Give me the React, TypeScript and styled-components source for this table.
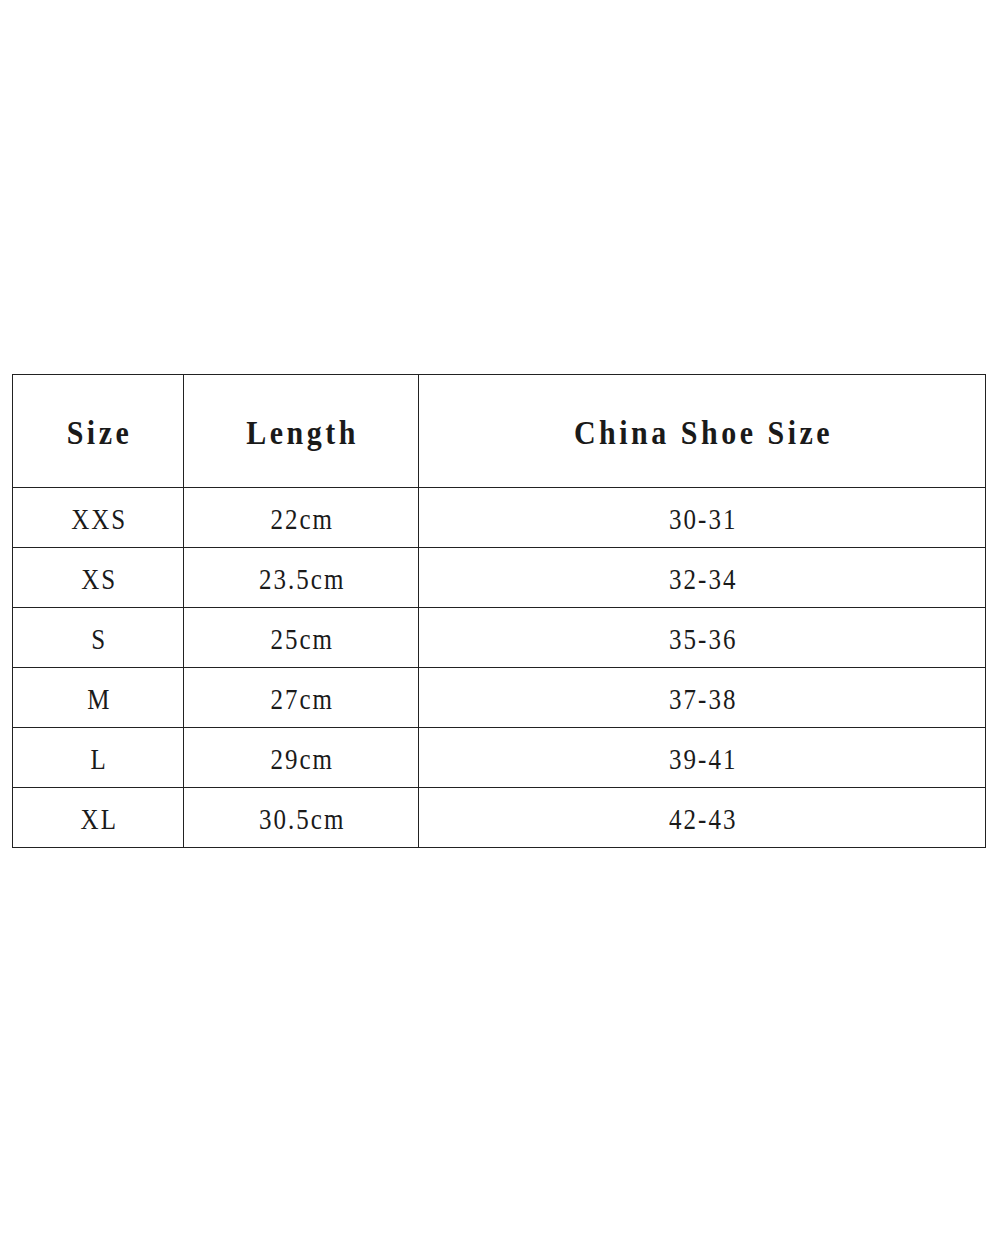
import React from 'react'
import styled, { createGlobalStyle } from 'styled-components'

const GlobalStyle = createGlobalStyle`
	html, body {
		margin: 0;
		padding: 0;
		background: #ffffff;
	}
`

interface SizeRow {
	size: string
	length: string
	china: string
}

const rows: SizeRow[] = [
	{ size: 'XXS', length: '22cm', china: '30-31' },
	{ size: 'XS', length: '23.5cm', china: '32-34' },
	{ size: 'S', length: '25cm', china: '35-36' },
	{ size: 'M', length: '27cm', china: '37-38' },
	{ size: 'L', length: '29cm', china: '39-41' },
	{ size: 'XL', length: '30.5cm', china: '42-43' },
]

const Page = styled.div`
	width: 1000px;
	height: 1250px;
	padding: 374px 0 0 12px;
	box-sizing: border-box;
	background: #fff;
`

const Table = styled.table`
	width: 970px;
	border-collapse: collapse;
	table-layout: fixed;
	font-family: 'Liberation Serif', 'Noto Sans CJK SC', serif;
	color: #1a1a1a;
`

const HeadCell = styled.th<{ $width: number }>`
	width: ${({ $width }) => $width}px;
	height: 108px;
	border: 1.5px solid #222;
	font-size: 30px;
	font-weight: bold;
	text-align: center;
	vertical-align: middle;
	padding: 4px 0 0;
	letter-spacing: 3.5px;
`

const Cell = styled.td`
	height: 55px;
	border: 1.5px solid #222;
	font-size: 25px;
	font-weight: normal;
	text-align: center;
	vertical-align: middle;
	padding: 4px 0 0;
	letter-spacing: 2px;
`

const Tall = styled.span<{ $stretch?: number }>`
	display: inline-block;
	transform: scaleY(${({ $stretch }) => $stretch ?? 1.15});
	margin-right: -0.1em;
`

export default function App() {
	return (
		<Page>
			<GlobalStyle />
			<Table>
				<thead>
					<tr>
						<HeadCell $width={170}>
							<Tall $stretch={1.1}>Size</Tall>
						</HeadCell>
						<HeadCell $width={234}>
							<Tall $stretch={1.1}>Length</Tall>
						</HeadCell>
						<HeadCell $width={566}>
							<Tall $stretch={1.1}>China Shoe Size</Tall>
						</HeadCell>
					</tr>
				</thead>
				<tbody>
					{rows.map((row) => (
						<tr key={row.size}>
							<Cell>
								<Tall>{row.size}</Tall>
							</Cell>
							<Cell>
								<Tall>{row.length}</Tall>
							</Cell>
							<Cell>
								<Tall>{row.china}</Tall>
							</Cell>
						</tr>
					))}
				</tbody>
			</Table>
		</Page>
	)
}
